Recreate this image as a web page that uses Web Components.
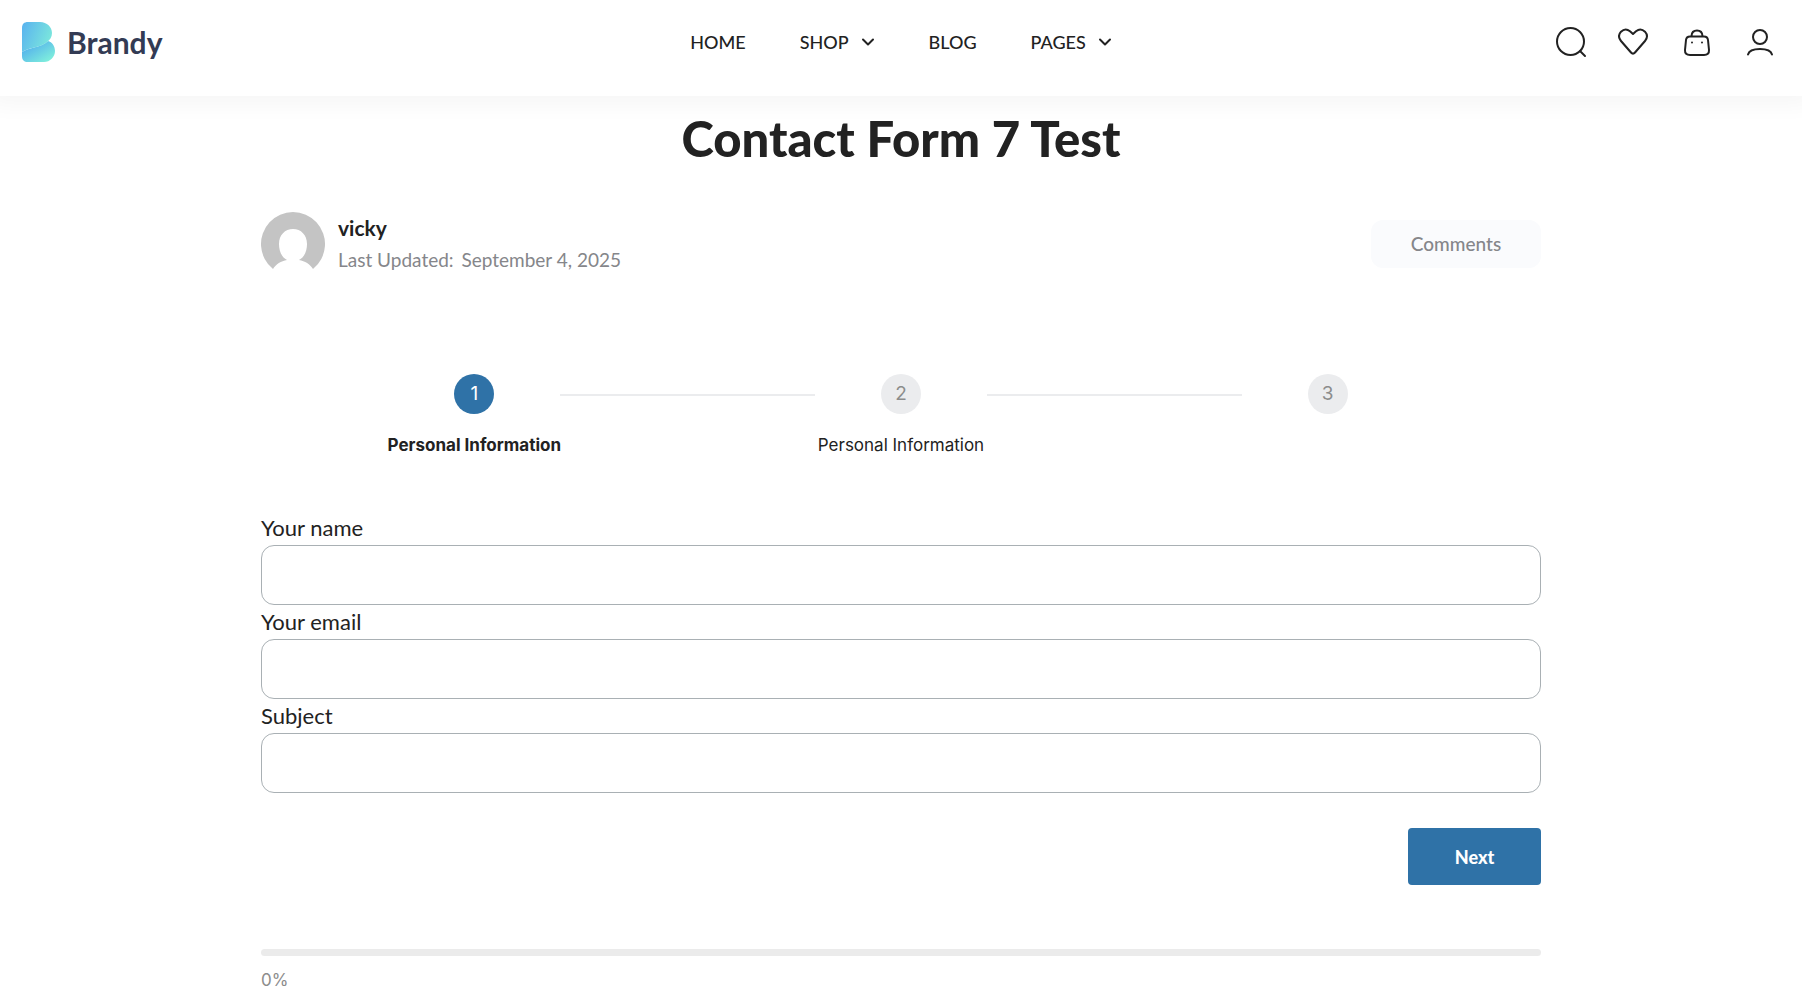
<!DOCTYPE html>
<html lang="en">
<head>
<meta charset="utf-8">
<meta name="viewport" content="width=device-width, initial-scale=1">
<title>Contact Form 7 Test</title>
<style>
  body {
    margin: 0;
    background: #fff;
    color: #222;
    font-family: Lato, "Open Sans", sans-serif;
  }
  main {
    max-width: 1280px;
    margin: 0 auto;
    padding: 12px 24px 8px;
  }
  h1 {
    margin: 0;
    font-size: 49px;
    line-height: 60px;
    font-weight: 900;
    text-align: center;
  }
</style>
</head>
<body>
<site-header></site-header>
<main>
  <h1>Contact Form 7 Test</h1>
  <post-meta author="vicky" date="September 4, 2025"></post-meta>
  <step-list>
    <step-item number="1" active>Personal Information</step-item>
    <step-item number="2">Personal Information</step-item>
    <step-item number="3"></step-item>
  </step-list>
  <contact-form>
    <form-field name="your-name" type="text">Your name</form-field>
    <form-field name="your-email" type="email">Your email</form-field>
    <form-field name="subject" type="text">Subject</form-field>
  </contact-form>
  <form-progress value="0"></form-progress>
</main>

<script>
class SiteHeader extends HTMLElement {
  connectedCallback() {
    this.attachShadow({ mode: 'open' });
    this.shadowRoot.innerHTML = `
      <style>
        :host {
          display: block;
          background: #fff;
          box-shadow: 0 0 20px 10px rgba(0, 0, 0, 0.035);
        }
        header {
          display: grid;
          grid-template-columns: 1fr auto 1fr;
          align-items: center;
          box-sizing: border-box;
          min-height: 96px;
          padding: 0 22px 12px;
        }
        a { color: #222; text-decoration: none; }
        .logo {
          display: flex;
          align-items: center;
          justify-self: start;
          gap: 12px;
          color: #333b54;
          font-size: 30px;
          line-height: 40px;
          font-weight: 700;
        }
        nav { display: flex; gap: 54px; }
        nav a {
          display: flex;
          align-items: center;
          gap: 12px;
          font-size: 18px;
          line-height: 24px;
          font-weight: 500;
        }
        svg { display: block; }
        .actions {
          display: flex;
          justify-self: end;
          gap: 31px;
          padding-right: 4px;
        }
        .line {
          fill: none;
          stroke: #222;
          stroke-width: 2;
          stroke-linecap: round;
          stroke-linejoin: round;
        }
      </style>
      <header>
        <a class="logo" href="#">
          <svg width="33" height="40" viewBox="0 0 33 40" aria-hidden="true">
            <defs>
              <linearGradient id="top" x1="0" y1="0.2" x2="1" y2="0.6">
                <stop offset="0" stop-color="#5bb5ee"/>
                <stop offset="1" stop-color="#7ce8dc"/>
              </linearGradient>
              <linearGradient id="bottom" x1="0.2" y1="0.2" x2="0.9" y2="0.9">
                <stop offset="0" stop-color="#55b2ec"/>
                <stop offset="1" stop-color="#80f0dc"/>
              </linearGradient>
            </defs>
            <path fill="url(#bottom)" d="M0 30C7 25 19 26 26 19C30 20 33 24 33 29C33 35 28 40 22 40H6C2 40 0 38 0 34Z"/>
            <path fill="url(#top)" d="M0 6C0 2 2 0 6 0H18C25 0 30 5 30 11C30 15 28 18 25 20C18 26 7 25 0 30Z"/>
          </svg>
          Brandy
        </a>
        <nav aria-label="Main">
          <a href="#">HOME</a>
          <a href="#">SHOP ${this.chevron()}</a>
          <a href="#">BLOG</a>
          <a href="#">PAGES ${this.chevron()}</a>
        </nav>
        <div class="actions">
          <a href="#" aria-label="Search">
            <svg class="line" width="32" height="32" viewBox="0 0 32 32"><circle cx="15.500" cy="15.500" r="13.500"/><path d="M25 25L30 30"/></svg>
          </a>
          <a href="#" aria-label="Wishlist">
            <svg class="line" width="32" height="32" viewBox="0 0 32 32"><path d="M15 8L12 5.200C9 2.800 5.500 3.200 3 5.700C0.500 8.500 0.500 12 3 15L13 26.500C14.300 28 15.700 28 17 26.500L27 15C29.500 12 29.500 8.500 27 5.700C24.500 3.200 21 2.800 18 5.200Z"/></svg>
          </a>
          <a href="#" aria-label="Cart">
            <svg class="line" width="32" height="32" viewBox="0 0 32 32"><path d="M9 10.500H23C25.500 10.500 26.700 11.500 27 14L28 24C28.200 27.500 26.500 29 23 29H9C5.500 29 3.800 27.500 4 24L5 14C5.300 11.500 6.500 10.500 9 10.500ZM10.500 10C10.700 6.500 12.500 4.500 16 4.500S21.300 6.500 21.500 10"/><path d="M11 16.500V16.510M21 16.500V16.510"/></svg>
          </a>
          <a href="#" aria-label="Account">
            <svg class="line" width="32" height="32" viewBox="0 0 32 32"><circle cx="16" cy="11" r="7"/><path d="M4 28.500C5 24.500 9 23 16 23S27 24.500 28 28.500"/></svg>
          </a>
        </div>
      </header>
    `;
  }

  chevron() {
    return '<svg class="line" width="14" height="10" viewBox="0 0 14 10" aria-hidden="true"><path d="M2 2.500L7 7.500L12 2.500"/></svg>';
  }
}

class PostMeta extends HTMLElement {
  connectedCallback() {
    this.attachShadow({ mode: 'open' });
    this.shadowRoot.innerHTML = `
      <style>
        :host {
          display: flex;
          align-items: center;
          justify-content: space-between;
          margin-top: 44px;
        }
        .author { display: flex; align-items: center; gap: 13px; }
        svg { display: block; }
        strong, span { display: block; line-height: 32px; }
        strong { font-size: 21px; font-weight: 700; }
        span { color: #85868a; font-size: 19px; }
        time { margin-left: 3px; }
        button {
          min-width: 170px;
          height: 48px;
          border: 0;
          border-radius: 12px;
          background: #fafbfd;
          color: #85868a;
          font: 500 19px/24px Lato, sans-serif;
        }
      </style>
      <div class="author">
        <svg width="64" height="64" viewBox="0 0 64 64" aria-hidden="true">
          <path fill="#c4c4c4" d="M12 57A32 32 0 1 1 52 57C49 52 44 49 38 48C44 45 46 38 46 32C46 23 40 17 32 17S18 23 18 32C18 38 20 45 26 48C20 49 15 52 12 57Z"/>
        </svg>
        <div>
          <strong>${this.getAttribute('author')}</strong>
          <span>Last Updated: <time>${this.getAttribute('date')}</time></span>
        </div>
      </div>
      <button type="button">Comments</button>
    `;
  }
}

class StepList extends HTMLElement {
  connectedCallback() {
    this.attachShadow({ mode: 'open' });
    this.setAttribute('role', 'list');
    this.shadowRoot.innerHTML = `
      <style>
        :host {
          display: grid;
          grid-template-columns: repeat(3, 1fr);
          margin-top: 98px;
        }
      </style>
      <slot></slot>
    `;
  }
}

class StepItem extends HTMLElement {
  connectedCallback() {
    this.attachShadow({ mode: 'open' });
    this.setAttribute('role', 'listitem');
    this.shadowRoot.innerHTML = `
      <style>
        :host {
          display: block;
          font-family: Inter, sans-serif;
          font-size: 17px;
          line-height: 24px;
          text-align: center;
        }
        .marker {
          display: grid;
          grid-template-columns: 1fr 40px 1fr;
          align-items: center;
        }
        .circle {
          grid-column: 2;
          border-radius: 50%;
          background: #ebecee;
          color: #8c8c8c;
          font-size: 19px;
          line-height: 40px;
        }
        /* runs across the border between two steps */
        .line {
          height: 2px;
          margin: 2px -66% 0 34%;
          background: #ebecee;
        }
        :host(:last-child) .line { display: none; }
        .label { min-height: 24px; margin-top: 19px; }
        :host([active]) .circle { background: #2f72a7; color: #fff; }
        :host([active]) .label { font-weight: 700; }
      </style>
      <div class="marker">
        <div class="circle">${this.getAttribute('number')}</div>
        <div class="line"></div>
      </div>
      <div class="label"><slot></slot></div>
    `;
  }
}

class FormField extends HTMLElement {
  connectedCallback() {
    this.attachShadow({ mode: 'open' });
    const name = this.getAttribute('name');
    this.shadowRoot.innerHTML = `
      <style>
        :host { display: block; }
        label {
          display: block;
          font-size: 22px;
          line-height: 34px;
        }
        input {
          display: block;
          box-sizing: border-box;
          width: 100%;
          height: 60px;
          padding: 0 20px;
          border: 1px solid #a9b0b4;
          border-radius: 13px;
          background: #fff;
          color: inherit;
          font: inherit;
          font-size: 20px;
        }
      </style>
      <label for="${name}"><slot></slot></label>
      <input id="${name}" name="${name}" type="${this.getAttribute('type')}">
    `;
  }
}

class ContactForm extends HTMLElement {
  connectedCallback() {
    this.attachShadow({ mode: 'open' });
    this.shadowRoot.innerHTML = `
      <style>
        :host { display: block; margin-top: 54px; }
        form { display: flex; flex-direction: column; }
        button {
          align-self: flex-end;
          min-width: 133px;
          height: 57px;
          margin-top: 35px;
          border: 0;
          border-radius: 4px;
          background: #2f72a7;
          color: #fff;
          font: 900 18px/24px Lato, sans-serif;
        }
      </style>
      <form>
        <slot></slot>
        <button type="button">Next</button>
      </form>
    `;
  }
}

class FormProgress extends HTMLElement {
  connectedCallback() {
    this.attachShadow({ mode: 'open' });
    const value = this.getAttribute('value');
    this.shadowRoot.innerHTML = `
      <style>
        :host {
          display: block;
          margin-top: 64px;
          color: #8c8c8c;
          font-family: Inter, sans-serif;
          font-size: 17px;
          line-height: 24px;
        }
        .track {
          height: 7px;
          margin-bottom: 12px;
          border-radius: 4px;
          background: #ebebeb;
          overflow: hidden;
        }
        .fill { width: ${value}%; height: 100%; background: #2f72a7; }
      </style>
      <div class="track" role="progressbar" aria-label="Form progress" aria-valuenow="${value}">
        <div class="fill"></div>
      </div>
      ${value}%
    `;
  }
}

customElements.define('site-header', SiteHeader);
customElements.define('post-meta', PostMeta);
customElements.define('step-list', StepList);
customElements.define('step-item', StepItem);
customElements.define('form-field', FormField);
customElements.define('contact-form', ContactForm);
customElements.define('form-progress', FormProgress);
</script>
</body>
</html>
